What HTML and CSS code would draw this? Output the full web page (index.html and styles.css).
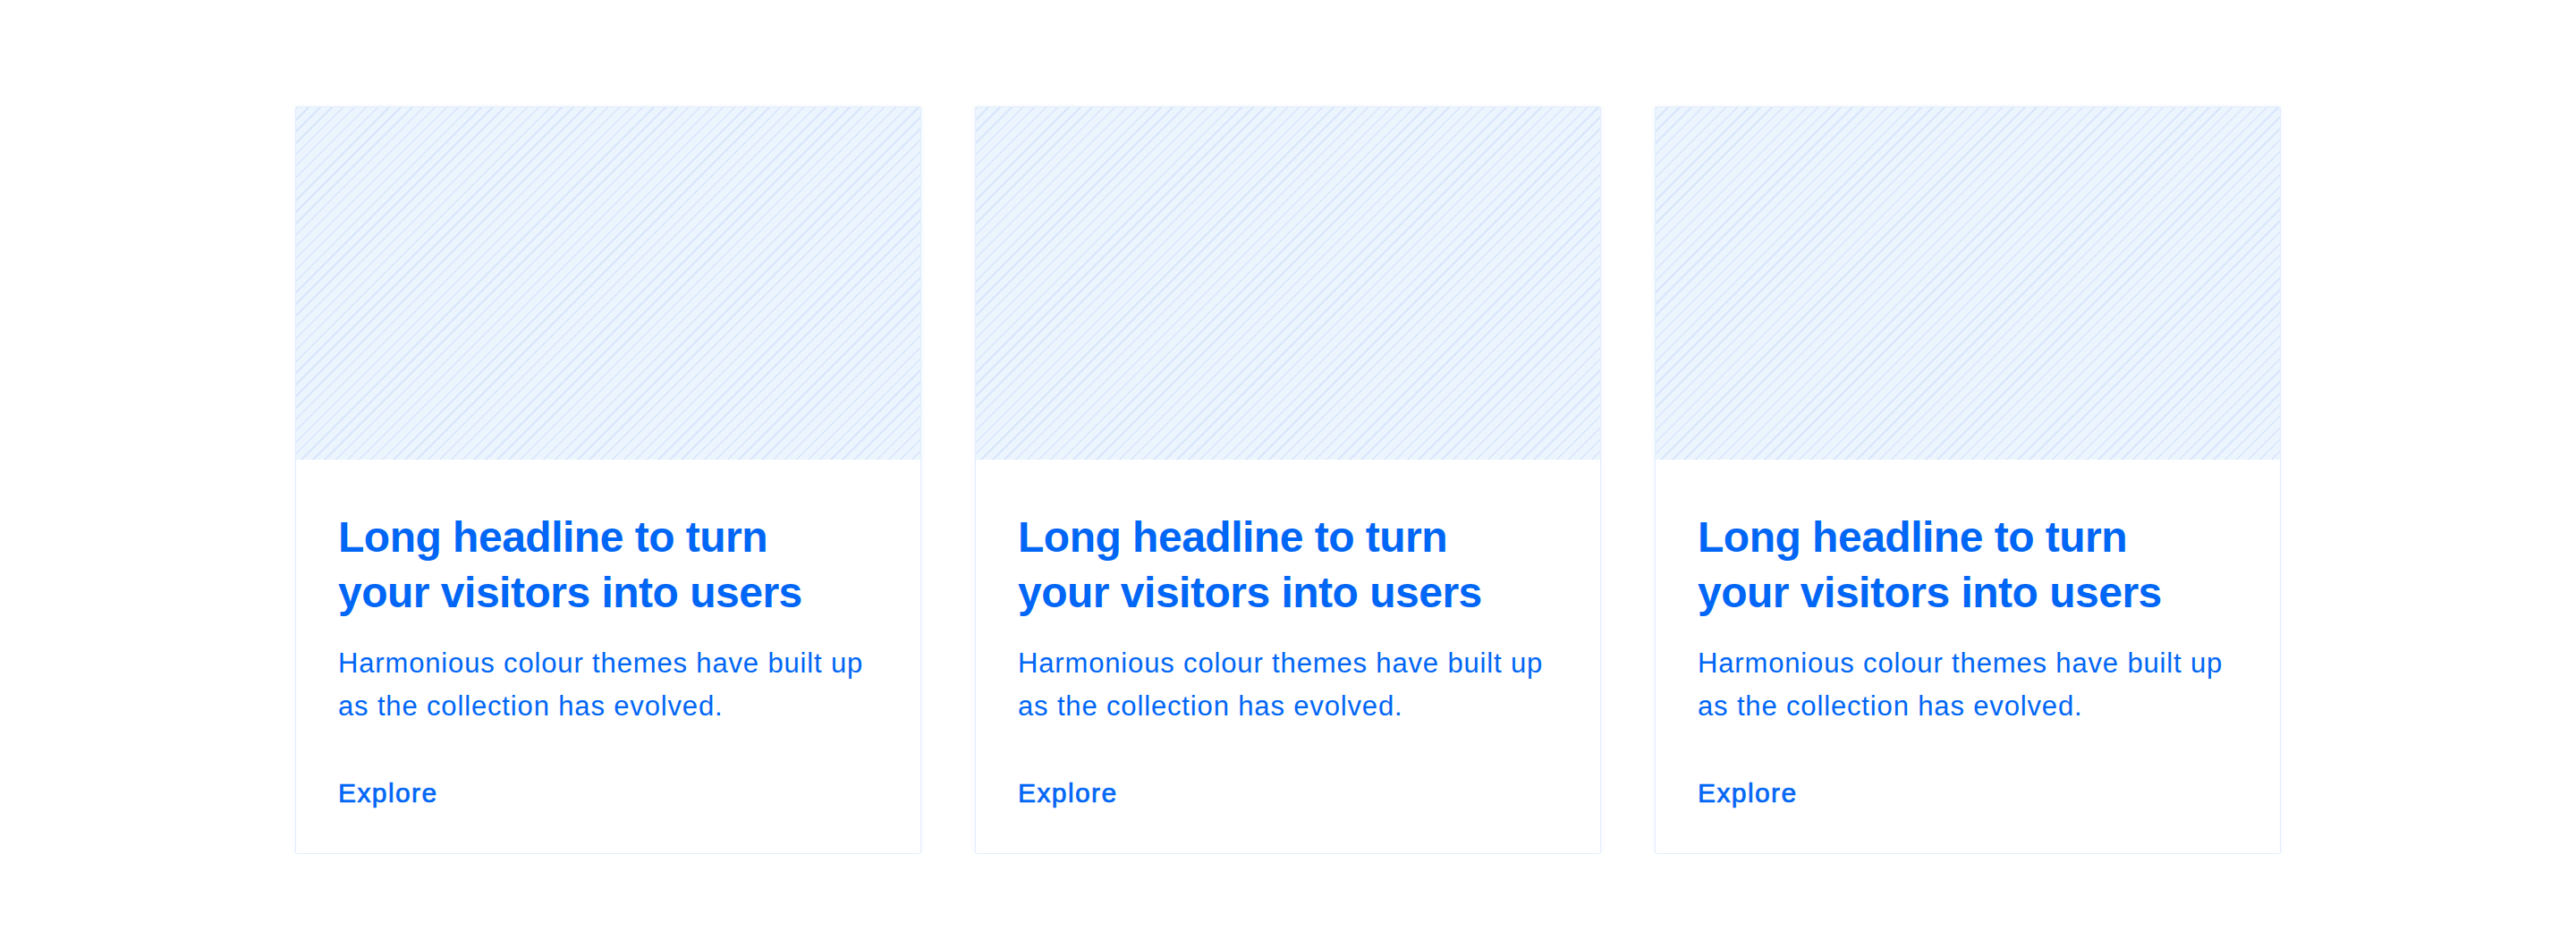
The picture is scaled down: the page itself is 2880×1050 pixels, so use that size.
FILE: index.html
```html
<!DOCTYPE html>
<html lang="en">
<head>
<meta charset="utf-8">
<title>Cards</title>
<link rel="stylesheet" href="styles.css">
</head>
<body>
<main class="cards">
  <article class="card">
    <div class="card-media"></div>
    <div class="card-body">
      <h2 class="card-title">Long headline to turn<br>your visitors into users</h2>
      <p class="card-text">Harmonious colour themes have built up<br>as the collection has evolved.</p>
      <a class="card-link" href="#">Explore</a>
    </div>
  </article>
  <article class="card">
    <div class="card-media"></div>
    <div class="card-body">
      <h2 class="card-title">Long headline to turn<br>your visitors into users</h2>
      <p class="card-text">Harmonious colour themes have built up<br>as the collection has evolved.</p>
      <a class="card-link" href="#">Explore</a>
    </div>
  </article>
  <article class="card">
    <div class="card-media"></div>
    <div class="card-body">
      <h2 class="card-title">Long headline to turn<br>your visitors into users</h2>
      <p class="card-text">Harmonious colour themes have built up<br>as the collection has evolved.</p>
      <a class="card-link" href="#">Explore</a>
    </div>
  </article>
</main>
</body>
</html>
```
FILE: styles.css
```css
html, body {
  margin: 0;
  padding: 0;
  background: #ffffff;
}
body {
  font-family: "Liberation Sans", Arial, sans-serif;
  color: #0066f5;
}
.cards {
  display: flex;
  justify-content: center;
  gap: 60px;
  padding-top: 119px;
}
.card {
  width: 700px;
  height: 836px;
  box-sizing: border-box;
  display: flex;
  flex-direction: column;
  background: #ffffff;
  border: 1px solid #e4eefc;
  box-shadow: 0 0 5px rgba(0, 102, 245, 0.08);
  border-radius: 2px;
}
.card-media {
  height: 394px;
  flex: none;
  background: repeating-linear-gradient(135deg, #d8e6fc 0 1.7px, #ecf4fe 1.7px 9.1px);
}
.card-body {
  padding: 56px 47px 48px 47px;
  display: flex;
  flex-direction: column;
  align-items: flex-start;
}
.card-title {
  margin: 0;
  font-size: 48px;
  line-height: 62px;
  font-weight: 700;
  letter-spacing: -0.5px;
  color: #0066f5;
}
.card-text {
  margin: 24px 0 0;
  font-size: 31px;
  line-height: 48px;
  font-weight: 400;
  letter-spacing: 0.85px;
  color: #0066f5;
}
.card-link {
  margin-top: 55px;
  font-size: 30px;
  line-height: 36px;
  letter-spacing: 1.4px;
  color: #0066f5;
  text-decoration: none;
  -webkit-text-stroke: 0.7px #0066f5;
}
```
